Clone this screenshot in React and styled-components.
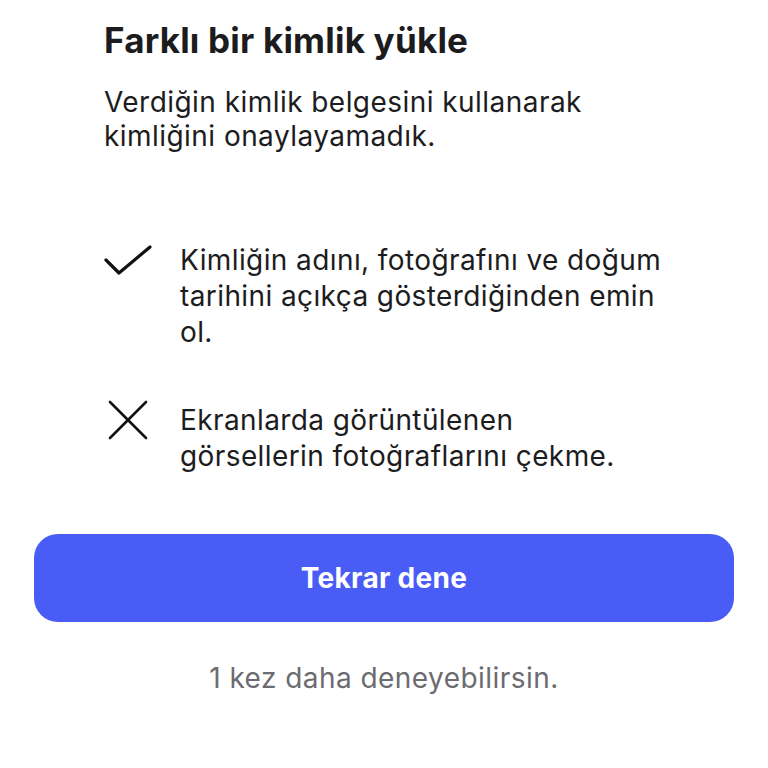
import styled, { createGlobalStyle } from "styled-components";

const Global = createGlobalStyle`
    body {
        margin: 0;
        background: #fff;
        font-family: Inter, "Noto Sans", sans-serif;
        color: #1c1c1e;
    }
`

const Page = styled.div`
    width: 768px;
    height: 768px;
    padding: 18px 34px 0;
    box-sizing: border-box;
    display: flex;
    flex-direction: column;
`

const Content = styled.div`
    padding: 0 60px 0 70px;
`

const Title = styled.h1`
    margin: 0;
    font-size: 35px;
    font-weight: 700;
    line-height: 44px;
    letter-spacing: 0.2px;
`

const Lead = styled.p`
    margin: 23px 0 0;
    font-size: 28px;
    line-height: 34px;
    letter-spacing: 0.45px;
`

const List = styled.div`
    margin-top: 89px;
    display: flex;
    flex-direction: column;
    gap: 52px;
`

const Item = styled.div`
    display: flex;
    gap: 28px;
    align-items: flex-start;
`

const IconBox = styled.div`
    width: 48px;
    flex: none;
    display: flex;
    justify-content: center;
    margin-top: ${props => props.top}px;
`

const ItemText = styled.p`
    margin: 0;
    max-width: 482px;
    font-size: 28px;
    line-height: 36px;
    letter-spacing: 0.4px;
`

const Button = styled.button`
    margin-top: 60px;
    height: 88px;
    border: none;
    border-radius: 24px;
    background: #4a5cf6;
    color: #fff;
    font-family: Inter, sans-serif;
    font-size: 28px;
    font-weight: 700;
    letter-spacing: 0.3px;
`

const Hint = styled.p`
    margin: 39px 0 0;
    text-align: center;
    font-size: 28px;
    line-height: 34px;
    letter-spacing: 0.45px;
    color: #6b6b70;
`

export default function App() {
    return <Page>
        <Global />
        <Content>
            <Title>Farklı bir kimlik yükle</Title>
            <Lead>Verdiğin kimlik belgesini kullanarak kimliğini onaylayamadık.</Lead>
            <List>
                <Item>
                    <IconBox top={3}>
                        <svg width="48" height="32" viewBox="0 0 48 32" fill="none" stroke="#111" strokeWidth="3.2" strokeLinecap="round" strokeLinejoin="round">
                            <path d="M2 15 L15 28 L46 2" />
                        </svg>
                    </IconBox>
                    <ItemText>Kimliğin adını, fotoğrafını ve doğum tarihini açıkça gösterdiğinden emin ol.</ItemText>
                </Item>
                <Item>
                    <IconBox top={-2}>
                        <svg width="40" height="40" viewBox="0 0 40 40" fill="none" stroke="#111" strokeWidth="2.6" strokeLinecap="round">
                            <path d="M2 2 L38 38 M38 2 L2 38" />
                        </svg>
                    </IconBox>
                    <ItemText>Ekranlarda görüntülenen görsellerin fotoğraflarını çekme.</ItemText>
                </Item>
            </List>
        </Content>
        <Button>Tekrar dene</Button>
        <Hint>1 kez daha deneyebilirsin.</Hint>
    </Page>
}
